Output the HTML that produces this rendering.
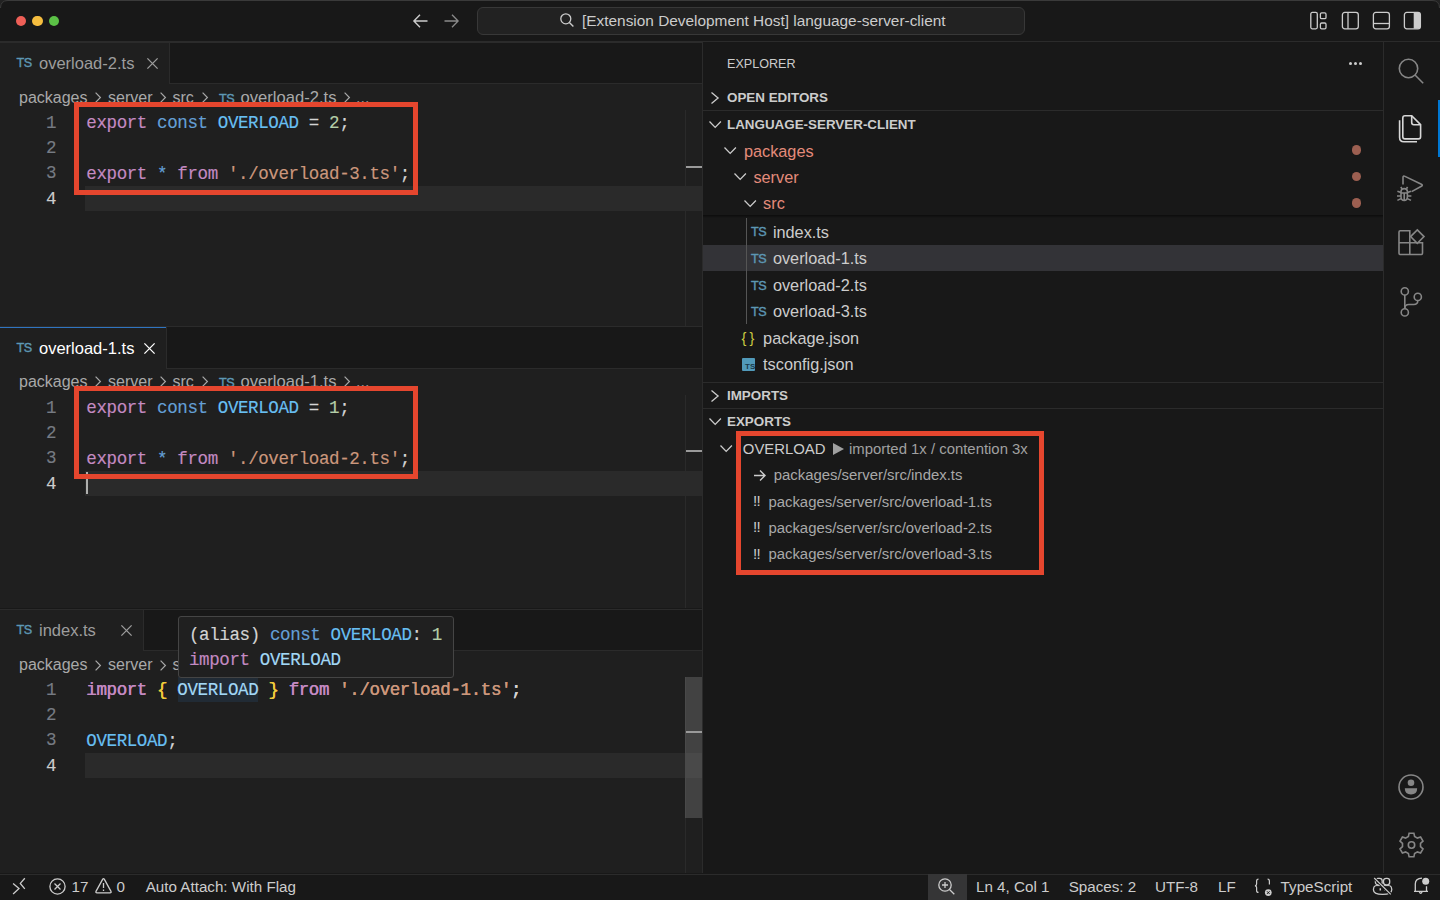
<!DOCTYPE html>
<html><head><meta charset="utf-8">
<style>
*{margin:0;padding:0;box-sizing:border-box}
html,body{width:1440px;height:900px;overflow:hidden;background:#181818;font-family:"Liberation Sans",sans-serif;color:#cccccc}
.a{position:absolute}
.t{position:absolute;white-space:pre}
.m{position:absolute;white-space:pre;font-family:"Liberation Mono",monospace;font-size:17.5px;letter-spacing:-0.39px;line-height:25.2px;color:#d4d4d4;-webkit-text-stroke:0.15px currentColor}
.k{color:#c48ac2}.s{color:#649fd6}.c{color:#68bff2}.v{color:#a2d8f6}.n{color:#b5cea8}.st{color:#cc977c}.p{color:#d4d4d4}.y{color:#f0cc3c}
.ln{position:absolute;left:0;width:56px;text-align:right;color:#767b83;font-family:"Liberation Mono",monospace;font-size:17.5px;letter-spacing:-0.39px;line-height:25.2px;-webkit-text-stroke:0.15px currentColor}
.ln.act{color:#cccccc}
.ts{position:absolute;font-family:"Liberation Sans",sans-serif;color:#5d97b4;font-size:12.6px;line-height:14px;letter-spacing:-0.5px;-webkit-text-stroke:0.4px #5d97b4}
.red{position:absolute;border:5px solid #e5462e}
svg{position:absolute;overflow:visible}
</style></head><body>
<div class="a" style="left:0;top:0;width:1440px;height:42px;background:#181818;border-bottom:1px solid #2b2b2b"></div>
<div class="a" style="left:0;top:0;width:1440px;height:1px;background:#3a3a3a"></div>
<svg style="left:0;top:0" width="8" height="8" viewBox="0 0 8 8"><path d="M0 0H8V0.5Q0.5 0.5 0.5 8H0Z" fill="#222"/><path d="M0.5 8Q0.5 0.5 8 0.5" fill="none" stroke="#3a3a3a" stroke-width="1"/></svg>
<svg style="left:1432px;top:0" width="8" height="8" viewBox="0 0 8 8"><path d="M8 0H0V0.5Q7.5 0.5 7.5 8H8Z" fill="#222"/><path d="M7.5 8Q7.5 0.5 0 0.5" fill="none" stroke="#3a3a3a" stroke-width="1"/></svg>
<div class="a" style="left:15.7px;top:15.7px;width:10.6px;height:10.6px;border-radius:50%;background:#ee5f57"></div>
<div class="a" style="left:32.3px;top:15.7px;width:10.6px;height:10.6px;border-radius:50%;background:#f5bd3f"></div>
<div class="a" style="left:48.9px;top:15.7px;width:10.6px;height:10.6px;border-radius:50%;background:#5bc146"></div>
<svg style="left:413px;top:13.5px" width="15" height="14" viewBox="0 0 15 14"><path d="M14.5 7H1M7 0.8L0.9 7L7 13.2" fill="none" stroke="#cccccc" stroke-width="1.4"/></svg>
<svg style="left:444px;top:13.5px" width="15" height="14" viewBox="0 0 15 14"><path d="M0.5 7H14M8 0.8L14.1 7L8 13.2" fill="none" stroke="#8a8a8a" stroke-width="1.3"/></svg>
<div class="a" style="left:477px;top:7px;width:548px;height:28px;border-radius:6px;background:#222222;border:1px solid #383838"></div>
<svg style="left:560px;top:13px" width="14" height="14" viewBox="0 0 14 14"><circle cx="5.8" cy="5.8" r="5" fill="none" stroke="#cccccc" stroke-width="1.3"/><path d="M9.4 9.4L13.4 13.4" stroke="#cccccc" stroke-width="1.4"/></svg>
<div class="t" style="left:582px;top:11px;font-size:15.4px;line-height:20px;color:#cccccc">[Extension Development Host] language-server-client</div>
<svg style="left:1309px;top:10.6px" width="20" height="19" viewBox="0 0 20 19" fill="none" stroke="#cccccc" stroke-width="1.3"><rect x="1.8" y="1.4" width="6.5" height="16.4" rx="1.5"/><rect x="11.4" y="1.9" width="5.6" height="5.8" rx="1.3"/><rect x="11.4" y="12" width="5.6" height="5.8" rx="1.3"/></svg>
<svg style="left:1341px;top:10.6px" width="18" height="19" viewBox="0 0 18 19" fill="none" stroke="#cccccc" stroke-width="1.3"><rect x="1.4" y="1.4" width="15.9" height="16.4" rx="2.4"/><path d="M7 1.4V17.8"/></svg>
<svg style="left:1372px;top:10.6px" width="18" height="19" viewBox="0 0 18 19" fill="none" stroke="#cccccc" stroke-width="1.3"><rect x="1.4" y="1.4" width="16" height="16.4" rx="2.4"/><path d="M1.4 12.5H17.4"/></svg>
<svg style="left:1403px;top:10.6px" width="18" height="19" viewBox="0 0 18 19" fill="none" stroke="#cccccc" stroke-width="1.3"><rect x="1.4" y="1.4" width="16" height="16.4" rx="2.4"/><path d="M10.7 1.4H15Q17.4 1.4 17.4 3.8V15.4Q17.4 17.8 15 17.8H10.7Z" fill="#cccccc" stroke="none"/></svg>
<div class="a" style="left:0;top:42px;width:702px;height:284px;background:#1f1f1f"></div>
<div class="a" style="left:0;top:42px;width:702px;height:42px;background:#181818;border-bottom:1px solid #2b2b2b"></div>
<div class="a" style="left:0;top:42px;width:169.5px;height:42px;background:#1f1f1f;border-right:1px solid #2b2b2b"></div>
<div class="ts" style="left:16.5px;top:56.4px">TS</div>
<div class="t" style="left:39px;top:53px;font-size:16.5px;line-height:20px;color:#9d9d9d">overload-2.ts</div>
<svg style="left:146.5px;top:57.5px" width="11" height="11" viewBox="0 0 11 11"><path d="M0.4 0.4L10.6 10.6M10.6 0.4L0.4 10.6" stroke="#9d9d9d" stroke-width="1.3"/></svg>
<div class="t" style="left:19px;top:87.89999999999999px;font-size:16px;line-height:20px;color:#a9a9a9">packages</div>
<svg style="left:95px;top:92.39999999999999px" width="6" height="11" viewBox="0 0 6 11"><path d="M0.6 0.6L5.4 5.5L0.6 10.4" fill="none" stroke="#a9a9a9" stroke-width="1.2"/></svg>
<div class="t" style="left:108px;top:87.89999999999999px;font-size:16px;line-height:20px;color:#a9a9a9">server</div>
<svg style="left:160px;top:92.39999999999999px" width="6" height="11" viewBox="0 0 6 11"><path d="M0.6 0.6L5.4 5.5L0.6 10.4" fill="none" stroke="#a9a9a9" stroke-width="1.2"/></svg>
<div class="t" style="left:172.5px;top:87.89999999999999px;font-size:16px;line-height:20px;color:#a9a9a9">src</div>
<svg style="left:202px;top:92.39999999999999px" width="6" height="11" viewBox="0 0 6 11"><path d="M0.6 0.6L5.4 5.5L0.6 10.4" fill="none" stroke="#a9a9a9" stroke-width="1.2"/></svg>
<div class="ts" style="left:219px;top:91.89999999999999px">TS</div>
<div class="t" style="left:240.5px;top:87.89999999999999px;font-size:16.6px;line-height:20px;color:#a9a9a9">overload-2.ts</div>
<svg style="left:343.7px;top:92.39999999999999px" width="6" height="11" viewBox="0 0 6 11"><path d="M0.6 0.6L5.4 5.5L0.6 10.4" fill="none" stroke="#a9a9a9" stroke-width="1.2"/></svg>
<div class="t" style="left:356px;top:87.89999999999999px;font-size:16px;line-height:20px;color:#a9a9a9">...</div>
<div class="a" style="left:85px;top:185.6px;width:617px;height:25.2px;background:#2a2a2a"></div>
<div class="ln" style="top:111.0px">1</div>
<div class="m" style="left:86.3px;top:111.2px"><span class="k">export</span> <span class="s">const</span> <span class="c">OVERLOAD</span> = <span class="n">2</span>;</div>
<div class="ln" style="top:136.2px">2</div>
<div class="ln" style="top:161.4px">3</div>
<div class="m" style="left:86.3px;top:161.6px"><span class="k">export</span> <span class="s">*</span> <span class="k">from</span> <span class="st">'./overload-3.ts'</span>;</div>
<div class="ln act" style="top:186.6px">4</div>
<div class="a" style="left:685px;top:110px;width:1px;height:216px;background:#2a2a2a"></div>
<div class="a" style="left:686px;top:165.5px;width:16px;height:2px;background:#9a9a9a"></div>
<div class="a" style="left:0;top:326px;width:702px;height:1px;background:#2b2b2b"></div>
<div class="a" style="left:0;top:41.6px;width:702px;height:1.2px;background:#2b2b2b"></div>
<div class="a" style="left:0;top:327px;width:702px;height:281px;background:#1f1f1f"></div>
<div class="a" style="left:0;top:327px;width:702px;height:42px;background:#181818;border-bottom:1px solid #2b2b2b"></div>
<div class="a" style="left:0;top:327px;width:167px;height:42px;background:#1f1f1f;border-right:1px solid #2b2b2b"></div>
<div class="a" style="left:0;top:326.7px;width:166px;height:1.6px;background:#2f74c0"></div>
<div class="ts" style="left:16.5px;top:341.4px">TS</div>
<div class="t" style="left:39px;top:338px;font-size:16.5px;line-height:20px;color:#ffffff">overload-1.ts</div>
<svg style="left:144px;top:342.5px" width="11" height="11" viewBox="0 0 11 11"><path d="M0.4 0.4L10.6 10.6M10.6 0.4L0.4 10.6" stroke="#ffffff" stroke-width="1.3"/></svg>
<div class="t" style="left:19px;top:371.7px;font-size:16px;line-height:20px;color:#a9a9a9">packages</div>
<svg style="left:95px;top:376.2px" width="6" height="11" viewBox="0 0 6 11"><path d="M0.6 0.6L5.4 5.5L0.6 10.4" fill="none" stroke="#a9a9a9" stroke-width="1.2"/></svg>
<div class="t" style="left:108px;top:371.7px;font-size:16px;line-height:20px;color:#a9a9a9">server</div>
<svg style="left:160px;top:376.2px" width="6" height="11" viewBox="0 0 6 11"><path d="M0.6 0.6L5.4 5.5L0.6 10.4" fill="none" stroke="#a9a9a9" stroke-width="1.2"/></svg>
<div class="t" style="left:172.5px;top:371.7px;font-size:16px;line-height:20px;color:#a9a9a9">src</div>
<svg style="left:202px;top:376.2px" width="6" height="11" viewBox="0 0 6 11"><path d="M0.6 0.6L5.4 5.5L0.6 10.4" fill="none" stroke="#a9a9a9" stroke-width="1.2"/></svg>
<div class="ts" style="left:219px;top:375.7px">TS</div>
<div class="t" style="left:240.5px;top:371.7px;font-size:16.6px;line-height:20px;color:#a9a9a9">overload-1.ts</div>
<svg style="left:343.7px;top:376.2px" width="6" height="11" viewBox="0 0 6 11"><path d="M0.6 0.6L5.4 5.5L0.6 10.4" fill="none" stroke="#a9a9a9" stroke-width="1.2"/></svg>
<div class="t" style="left:356px;top:371.7px;font-size:16px;line-height:20px;color:#a9a9a9">...</div>
<div class="a" style="left:85px;top:470.6px;width:617px;height:25.2px;background:#2a2a2a"></div>
<div class="ln" style="top:396.0px">1</div>
<div class="m" style="left:86.3px;top:396.2px"><span class="k">export</span> <span class="s">const</span> <span class="c">OVERLOAD</span> = <span class="n">1</span>;</div>
<div class="ln" style="top:421.2px">2</div>
<div class="ln" style="top:446.4px">3</div>
<div class="m" style="left:86.3px;top:446.59999999999997px"><span class="k">export</span> <span class="s">*</span> <span class="k">from</span> <span class="st">'./overload-2.ts'</span>;</div>
<div class="ln act" style="top:471.6px">4</div>
<div class="a" style="left:685px;top:395px;width:1px;height:213px;background:#2a2a2a"></div>
<div class="a" style="left:686px;top:450px;width:16px;height:2px;background:#9a9a9a"></div>
<div class="a" style="left:0;top:609px;width:702px;height:264px;background:#1f1f1f"></div>
<div class="a" style="left:0;top:609px;width:702px;height:42px;background:#181818;border-bottom:1px solid #2b2b2b"></div>
<div class="a" style="left:0;top:609px;width:144px;height:42px;background:#1f1f1f;border-right:1px solid #2b2b2b"></div>
<div class="ts" style="left:16.5px;top:623.4px">TS</div>
<div class="t" style="left:39px;top:620px;font-size:16.5px;line-height:20px;color:#9d9d9d">index.ts</div>
<svg style="left:121px;top:624.5px" width="11" height="11" viewBox="0 0 11 11"><path d="M0.4 0.4L10.6 10.6M10.6 0.4L0.4 10.6" stroke="#9d9d9d" stroke-width="1.3"/></svg>
<div class="t" style="left:19px;top:655.3px;font-size:16px;line-height:20px;color:#a9a9a9">packages</div>
<svg style="left:95px;top:659.8px" width="6" height="11" viewBox="0 0 6 11"><path d="M0.6 0.6L5.4 5.5L0.6 10.4" fill="none" stroke="#a9a9a9" stroke-width="1.2"/></svg>
<div class="t" style="left:108px;top:655.3px;font-size:16px;line-height:20px;color:#a9a9a9">server</div>
<svg style="left:160px;top:659.8px" width="6" height="11" viewBox="0 0 6 11"><path d="M0.6 0.6L5.4 5.5L0.6 10.4" fill="none" stroke="#a9a9a9" stroke-width="1.2"/></svg>
<div class="t" style="left:172.5px;top:655.3px;font-size:16px;line-height:20px;color:#a9a9a9">src</div>
<svg style="left:202px;top:659.8px" width="6" height="11" viewBox="0 0 6 11"><path d="M0.6 0.6L5.4 5.5L0.6 10.4" fill="none" stroke="#a9a9a9" stroke-width="1.2"/></svg>
<div class="ts" style="left:219px;top:659.3px">TS</div>
<div class="t" style="left:240.5px;top:655.3px;font-size:16.6px;line-height:20px;color:#a9a9a9">index.ts</div>
<svg style="left:343.7px;top:659.8px" width="6" height="11" viewBox="0 0 6 11"><path d="M0.6 0.6L5.4 5.5L0.6 10.4" fill="none" stroke="#a9a9a9" stroke-width="1.2"/></svg>
<div class="t" style="left:356px;top:655.3px;font-size:16px;line-height:20px;color:#a9a9a9">...</div>
<div class="a" style="left:85px;top:752.6px;width:617px;height:25.2px;background:#2a2a2a"></div>
<div class="ln" style="top:678.0px">1</div>
<div class="m" style="left:86.3px;top:678.2px"><span class="k">import</span> <span class="y">{</span> <span class="v">OVERLOAD</span> <span class="y">}</span> <span class="k">from</span> <span class="st">'./overload-1.ts'</span>;</div>
<div class="ln" style="top:703.2px">2</div>
<div class="ln" style="top:728.4px">3</div>
<div class="m" style="left:86.3px;top:728.6px"><span class="c">OVERLOAD</span>;</div>
<div class="ln act" style="top:753.6px">4</div>
<div class="a" style="left:685px;top:677px;width:1px;height:196px;background:#2a2a2a"></div>
<div class="a" style="left:685px;top:677px;width:17px;height:141px;background:rgba(121,121,121,0.4)"></div>
<div class="a" style="left:686px;top:730.5px;width:16px;height:2px;background:#9a9a9a"></div>
<div class="a" style="left:0;top:609px;width:702px;height:1px;background:#2b2b2b"></div>
<div class="a" style="left:86px;top:472px;width:2px;height:22px;background:#aeafad"></div>
<div class="a" style="left:177.5px;top:677px;width:80.5px;height:25.2px;background:#212b35"></div>
<div class="m" style="left:86.3px;top:678.2px"><span class="k">import</span> <span class="y">{</span> <span class="v">OVERLOAD</span> <span class="y">}</span> <span class="k">from</span> <span class="st">'./overload-1.ts'</span>;</div>
<div class="red" style="left:73.9px;top:102.1px;width:344.3px;height:92.7px"></div>
<div class="red" style="left:73.9px;top:386.2px;width:344.3px;height:92.7px"></div>
<div class="a" style="left:178px;top:616px;width:276px;height:61.7px;background:#202020;border:1px solid #454545;border-radius:3px"></div>
<div class="m" style="left:189px;top:622.6px"><span class="p">(alias)</span> <span class="s">const</span> <span class="c">OVERLOAD</span><span class="p">:</span> <span class="n">1</span></div>
<div class="m" style="left:189px;top:647.8px"><span class="k">import</span> <span class="v">OVERLOAD</span></div>
<div class="a" style="left:702px;top:42px;width:682px;height:831px;background:#181818;border-left:1px solid #2b2b2b;border-right:1px solid #2b2b2b"></div>
<div class="t" style="left:727px;top:56px;font-size:12.6px;line-height:16px;color:#cccccc">EXPLORER</div>
<div class="a" style="left:1349.3px;top:61.5px;width:3.2px;height:3.2px;border-radius:50%;background:#cccccc"></div>
<div class="a" style="left:1353.8999999999999px;top:61.5px;width:3.2px;height:3.2px;border-radius:50%;background:#cccccc"></div>
<div class="a" style="left:1358.5px;top:61.5px;width:3.2px;height:3.2px;border-radius:50%;background:#cccccc"></div>
<svg style="left:711px;top:91.5px" width="7.7" height="12" viewBox="0 0 7.7 12"><path d="M0.5 0.5L7.1000000000000005 6.0L0.5 11.5" fill="none" stroke="#cccccc" stroke-width="1.3"/></svg>
<div class="t" style="left:727px;top:90.2px;font-size:13.4px;line-height:16px;font-weight:bold;color:#cccccc">OPEN EDITORS</div>
<div class="a" style="left:703px;top:110px;width:680px;height:1px;background:#2b2b2b"></div>
<svg style="left:708.5px;top:120.5px" width="12.4" height="7" viewBox="0 0 12.4 7"><path d="M0.5 0.5L6.2 6.4L11.9 0.5" fill="none" stroke="#cccccc" stroke-width="1.3"/></svg>
<div class="t" style="left:727px;top:117.2px;font-size:13.4px;line-height:16px;font-weight:bold;color:#cccccc">LANGUAGE-SERVER-CLIENT</div>
<svg style="left:723.5px;top:147px" width="12.4" height="7" viewBox="0 0 12.4 7"><path d="M0.5 0.5L6.2 6.4L11.9 0.5" fill="none" stroke="#cccccc" stroke-width="1.3"/></svg>
<div class="t" style="left:743.9px;top:140.70000000000002px;font-size:16.3px;line-height:20px;color:#e48b7b">packages</div>
<svg style="left:734px;top:173.3px" width="12.4" height="7" viewBox="0 0 12.4 7"><path d="M0.5 0.5L6.2 6.4L11.9 0.5" fill="none" stroke="#cccccc" stroke-width="1.3"/></svg>
<div class="t" style="left:753.4px;top:166.9px;font-size:16.3px;line-height:20px;color:#e48b7b">server</div>
<svg style="left:744px;top:199.8px" width="12.4" height="7" viewBox="0 0 12.4 7"><path d="M0.5 0.5L6.2 6.4L11.9 0.5" fill="none" stroke="#cccccc" stroke-width="1.3"/></svg>
<div class="t" style="left:763.1px;top:193.4px;font-size:16.3px;line-height:20px;color:#e48b7b">src</div>
<div class="a" style="left:1352px;top:145.4px;width:9.2px;height:9.2px;border-radius:50%;background:#9c5f51"></div>
<div class="a" style="left:1352px;top:171.9px;width:9.2px;height:9.2px;border-radius:50%;background:#9c5f51"></div>
<div class="a" style="left:1352px;top:198.4px;width:9.2px;height:9.2px;border-radius:50%;background:#9c5f51"></div>
<div class="a" style="left:703px;top:244.6px;width:680px;height:26.4px;background:#333337"></div>
<div class="a" style="left:745.8px;top:216px;width:1px;height:107.6px;background:#555555"></div>
<div class="ts" style="left:751px;top:225.39999999999998px">TS</div>
<div class="t" style="left:772.9px;top:221.6px;font-size:16.3px;line-height:20px;color:#cccccc">index.ts</div>
<div class="ts" style="left:751px;top:252.0px">TS</div>
<div class="t" style="left:772.9px;top:248.20000000000002px;font-size:16.3px;line-height:20px;color:#cccccc">overload-1.ts</div>
<div class="ts" style="left:751px;top:278.8px">TS</div>
<div class="t" style="left:772.9px;top:275.0px;font-size:16.3px;line-height:20px;color:#cccccc">overload-2.ts</div>
<div class="ts" style="left:751px;top:305.2px">TS</div>
<div class="t" style="left:772.9px;top:301.4px;font-size:16.3px;line-height:20px;color:#cccccc">overload-3.ts</div>
<div class="a" style="left:703px;top:215px;width:680px;height:3px;background:linear-gradient(#0c0c0c,#181818)"></div>
<div class="t" style="left:741.5px;top:328px;font-size:14.5px;line-height:20px;color:#cbcb41;letter-spacing:3.2px">{}</div>
<div class="t" style="left:763.1px;top:327.7px;font-size:16.3px;line-height:20px;color:#cccccc">package.json</div>
<div class="a" style="left:741.5px;top:357.5px;width:13.5px;height:13.5px;background:#519aba;border-radius:1px"></div>
<div class="t" style="left:745px;top:363px;font-size:8px;line-height:8px;font-weight:bold;color:#1b3a4a">TS</div>
<div class="t" style="left:763.1px;top:354.0px;font-size:16.3px;line-height:20px;color:#cccccc">tsconfig.json</div>
<div class="a" style="left:703px;top:382px;width:680px;height:1px;background:#2b2b2b"></div>
<svg style="left:711px;top:389.5px" width="7.7" height="12" viewBox="0 0 7.7 12"><path d="M0.5 0.5L7.1000000000000005 6.0L0.5 11.5" fill="none" stroke="#cccccc" stroke-width="1.3"/></svg>
<div class="t" style="left:727px;top:388.2px;font-size:13.4px;line-height:16px;font-weight:bold;color:#cccccc">IMPORTS</div>
<div class="a" style="left:703px;top:408px;width:680px;height:1px;background:#2b2b2b"></div>
<svg style="left:708.5px;top:417.6px" width="12.4" height="7" viewBox="0 0 12.4 7"><path d="M0.5 0.5L6.2 6.4L11.9 0.5" fill="none" stroke="#cccccc" stroke-width="1.3"/></svg>
<div class="t" style="left:727px;top:414.3px;font-size:13.4px;line-height:16px;font-weight:bold;color:#cccccc">EXPORTS</div>
<svg style="left:719.5px;top:445px" width="12.4" height="7" viewBox="0 0 12.4 7"><path d="M0.5 0.5L6.2 6.4L11.9 0.5" fill="none" stroke="#cccccc" stroke-width="1.3"/></svg>
<div class="t" style="left:742.8px;top:438.79999999999995px;font-size:14.9px;line-height:20px;color:#cccccc">OVERLOAD</div>
<svg style="left:832.5px;top:442.5px" width="11" height="12" viewBox="0 0 11 12"><path d="M0 0L11 6L0 12Z" fill="#a0a0a0"/></svg>
<div class="t" style="left:849px;top:438.79999999999995px;font-size:14.9px;line-height:20px;color:#a0a0a0">imported 1x / contention 3x</div>
<svg style="left:753.5px;top:469.5px" width="12" height="11" viewBox="0 0 12 11"><path d="M0 5.5H11M6 0.6L11 5.5L6 10.4" fill="none" stroke="#cccccc" stroke-width="1.4"/></svg>
<div class="t" style="left:773.7px;top:465.2px;font-size:14.9px;line-height:20px;color:#a8a8a8">packages/server/src/index.ts</div>
<div class="t" style="left:753px;top:490.7px;font-size:15px;line-height:20px;color:#cccccc;letter-spacing:-0.6px">!!</div>
<div class="t" style="left:768.4px;top:491.59999999999997px;font-size:14.9px;line-height:20px;color:#a8a8a8">packages/server/src/overload-1.ts</div>
<div class="t" style="left:753px;top:517.1px;font-size:15px;line-height:20px;color:#cccccc;letter-spacing:-0.6px">!!</div>
<div class="t" style="left:768.4px;top:518.0px;font-size:14.9px;line-height:20px;color:#a8a8a8">packages/server/src/overload-2.ts</div>
<div class="t" style="left:753px;top:543.5px;font-size:15px;line-height:20px;color:#cccccc;letter-spacing:-0.6px">!!</div>
<div class="t" style="left:768.4px;top:544.4px;font-size:14.9px;line-height:20px;color:#a8a8a8">packages/server/src/overload-3.ts</div>
<div class="red" style="left:736px;top:431px;width:308px;height:144px"></div>
<svg style="left:1398px;top:57.5px" width="26" height="26" viewBox="0 0 26 26" fill="none" stroke="#868686" stroke-width="1.6"><circle cx="10.5" cy="10.5" r="9.2"/><path d="M17 17L25.2 25.2"/></svg>
<div class="a" style="left:1437.5px;top:99.5px;width:2.5px;height:57.5px;background:#0078d4"></div>
<svg style="left:1398px;top:114px" width="25" height="30" viewBox="0 0 25 30" fill="none" stroke="#d7d7d7" stroke-width="1.6"><path d="M7 1.8H13.7L22.6 10.7V22.8Q22.6 24.9 20.5 24.9H7Q4.8 24.9 4.8 22.8V4Q4.8 1.8 7 1.8Z"/><path d="M13.7 1.8V8.6Q13.7 10.7 15.8 10.7H22.6"/><path d="M1.6 6.2V23.6Q1.6 27.8 5.8 27.8H19"/></svg>
<svg style="left:1396px;top:174px" width="28" height="28" viewBox="0 0 28 28" fill="none" stroke="#868686" stroke-width="1.6"><path d="M7 10.5V3.6Q7 1.4 9 2.4L25.4 10.3Q27.2 11.2 25.4 12.2L15.6 17.6"/><path d="M5 17.6Q5 14.6 8.2 14.6Q11.4 14.6 11.4 17.6V22.4Q11.4 26.4 8.2 26.4Q5 26.4 5 22.4Z"/><path d="M8.2 19V26.4M5 19H11.4M1.4 17.2L5 18.6M15 17.2L11.4 18.6M1 22H5M11.4 22H15.4M1.4 26.4L5 24.6M15 26.4L11.4 24.6M6 14.8L4.8 13M10.4 14.8L11.6 13"/></svg>
<svg style="left:1398px;top:229px" width="27" height="27" viewBox="0 0 27 27" fill="none" stroke="#868686" stroke-width="1.6"><path d="M1 3Q1 1.8 2.2 1.8H11.8V13.7H24.5V24.3Q24.5 25.5 23.3 25.5H2.2Q1 25.5 1 24.3Z"/><path d="M1 13.7H11.8V25.5"/><path d="M19.3 0.9L26 7.6L19.3 14.3L12.6 7.6Z"/></svg>
<svg style="left:1400px;top:287px" width="23" height="30" viewBox="0 0 23 30" fill="none" stroke="#868686" stroke-width="1.6"><circle cx="4.8" cy="4.4" r="3.6"/><circle cx="4.8" cy="25.4" r="3.6"/><circle cx="17.8" cy="9.9" r="3.6"/><path d="M4.8 8V21.8"/><path d="M17.8 13.5Q17.8 17.5 13.8 17.5H8.8Q4.8 17.5 4.8 21.5"/></svg>
<svg style="left:1398px;top:773.5px" width="26" height="26" viewBox="0 0 26 26"><circle cx="13" cy="13" r="12" fill="none" stroke="#868686" stroke-width="1.6"/><circle cx="13" cy="8.8" r="3.3" fill="#868686"/><path d="M6.8 14.3H19.2Q19.2 20.5 13 20.5Q6.8 20.5 6.8 14.3Z" fill="#868686"/></svg>
<svg style="left:1398.5px;top:831.5px" width="25" height="26" viewBox="-12.5 -13 25 26" fill="none" stroke="#868686" stroke-width="1.6"><path d="M-2.4 -11.8H2.4L3.1 -8.5L5.9 -6.9L9.1 -8L11.5 -3.9L9 -1.6V1.6L11.5 3.9L9.1 8L5.9 6.9L3.1 8.5L2.4 11.8H-2.4L-3.1 8.5L-5.9 6.9L-9.1 8L-11.5 3.9L-9 1.6V-1.6L-11.5 -3.9L-9.1 -8L-5.9 -6.9L-3.1 -8.5Z"/><circle cx="0" cy="0" r="3.2"/></svg>
<div class="a" style="left:0;top:873.5px;width:1440px;height:27px;background:#181818;border-top:1.2px solid #2b2b2b"></div>
<svg style="left:12px;top:877px" width="14" height="18" viewBox="0 0 14 18" fill="none" stroke="#cccccc" stroke-width="1.3"><path d="M1.1 6.4L7 11.5L1.1 16.9"/><path d="M12.8 1.3L8.3 6.4L12.8 11.8"/></svg>
<svg style="left:49px;top:877.5px" width="17" height="17" viewBox="0 0 17 17" fill="none" stroke="#cccccc" stroke-width="1.3"><circle cx="8.5" cy="8.5" r="7.6"/><path d="M5.5 5.5L11.5 11.5M11.5 5.5L5.5 11.5"/></svg>
<div class="t" style="left:71.5px;top:876.6px;font-size:15.2px;line-height:20px;color:#cccccc">17</div>
<svg style="left:95px;top:878px" width="17" height="16" viewBox="0 0 17 16" fill="none" stroke="#cccccc" stroke-width="1.3"><path d="M7.6 1.4Q8.5 0 9.4 1.4L16 13.4Q16.6 14.8 15 14.8H2Q0.4 14.8 1 13.4Z" stroke-linejoin="round"/><path d="M8.5 5V10M8.5 11.6V13"/></svg>
<div class="t" style="left:116.5px;top:876.6px;font-size:15.2px;line-height:20px;color:#cccccc">0</div>
<div class="t" style="left:145.7px;top:876.6px;font-size:15.2px;line-height:20px;color:#cccccc">Auto Attach: With Flag</div>
<div class="a" style="left:928px;top:874px;width:38.7px;height:26px;background:#353536"></div>
<svg style="left:938px;top:877.7px" width="17" height="17" viewBox="0 0 17 17" fill="none" stroke="#cccccc" stroke-width="1.3"><circle cx="7" cy="7" r="6.2"/><path d="M11.5 11.5L16.3 16.3M4 7H10M7 4V10"/></svg>
<div class="t" style="left:976px;top:876.6px;font-size:15.2px;line-height:20px;color:#cccccc">Ln 4, Col 1</div>
<div class="t" style="left:1068.7px;top:876.6px;font-size:15.2px;line-height:20px;color:#cccccc">Spaces: 2</div>
<div class="t" style="left:1155px;top:876.6px;font-size:15.2px;line-height:20px;color:#cccccc">UTF-8</div>
<div class="t" style="left:1218px;top:876.6px;font-size:15.2px;line-height:20px;color:#cccccc">LF</div>
<svg style="left:1254px;top:878px" width="19" height="19" viewBox="0 0 19 19" fill="none" stroke="#cccccc" stroke-width="1.2"><path d="M4.5 1.2Q2.6 1.2 2.6 3.2V6Q2.6 7.6 1 7.8Q2.6 8 2.6 9.6V12.4Q2.6 14.4 4.5 14.4"/><path d="M13.6 1.2Q15.4 1.2 15.4 3.2V6.5"/><circle cx="14.3" cy="14.6" r="3.4" fill="#cccccc" stroke="none"/><path d="M13 13.3L15.6 15.9M15.6 13.3L13 15.9" stroke="#181818" stroke-width="1"/></svg>
<div class="t" style="left:1280.6px;top:876.6px;font-size:15.2px;line-height:20px;color:#cccccc">TypeScript</div>
<svg style="left:1372px;top:876px" width="22" height="20" viewBox="0 0 22 20" fill="none" stroke="#cccccc" stroke-width="1.3"><rect x="3.4" y="2.3" width="6.8" height="6.6" rx="2.6"/><rect x="11.5" y="2.3" width="6.2" height="6.6" rx="2.6"/><path d="M3.6 9.5Q1.4 10.6 1.4 13.4Q1.4 18.4 10.6 18.4Q19.8 18.4 19.8 13.4Q19.8 10.6 17.6 9.5"/><path d="M3.6 9.6H17.6" stroke-width="1"/><path d="M8.3 12.2V14.6M12.9 12.2V14.6" stroke-width="1.5"/><path d="M2.2 2L18.8 18.4" stroke="#181818" stroke-width="3"/><path d="M2.2 2L18.8 18.4" stroke-width="1.2"/></svg>
<svg style="left:1412px;top:876px" width="18" height="20" viewBox="0 0 18 20" fill="none" stroke="#cccccc" stroke-width="1.3"><path d="M2 15.3H16M3.3 15.3V8Q3.3 2.4 10 2.2M14.5 10.3V15.3M7.2 15.6Q8.7 19.2 10.2 15.6"/><circle cx="13.7" cy="5.3" r="3.5" fill="#cccccc" stroke="none"/></svg>
</body></html>
